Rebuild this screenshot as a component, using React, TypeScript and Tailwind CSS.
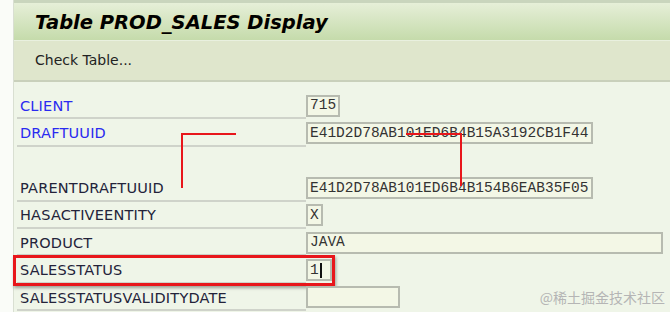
import React from 'react';

type Row = { label: string; value?: string; width: number; key?: boolean; cursor?: boolean; blank?: boolean };

const rows: Row[] = [
  { label: 'CLIENT', value: '715', width: 34, key: true },
  { label: 'DRAFTUUID', value: 'E41D2D78AB101ED6B4B15A3192CB1F44', width: 287, key: true },
  { label: '', width: 0, blank: true },
  { label: 'PARENTDRAFTUUID', value: 'E41D2D78AB101ED6B4B154B6EAB35F05', width: 287 },
  { label: 'HASACTIVEENTITY', value: 'X', width: 17 },
  { label: 'PRODUCT', value: 'JAVA', width: 357 },
  { label: 'SALESSTATUS', value: '1', width: 26, cursor: true },
  { label: 'SALESSTATUSVALIDITYDATE', value: '', width: 94 },
];

const labelFont = { fontFamily: '"DejaVu Sans", Verdana, sans-serif' };
const monoFont = { fontFamily: '"Liberation Mono", "Courier New", monospace' };

export default function App() {
  return (
    <div className="relative w-[670px] h-[312px] overflow-hidden bg-[#fafcf8] flex">
      <div className="w-[13px] shrink-0" />
      <div className="flex-1 flex flex-col border-l border-[#d9dfd2]">
        <div className="h-[3px] bg-[#c9d5bd]" />
        <div className="h-[38px] flex items-center pl-[21px] pt-[3px] bg-gradient-to-b from-[#e6efd8] to-[#c5dbab] border-b border-[#e9f0df]">
          <h1
            className="text-[19.5px] font-bold italic text-black [text-shadow:0_0_2px_#e8e6a0]"
            style={{ fontFamily: '"DejaVu Sans", Tahoma, sans-serif' }}
          >
            Table PROD_SALES Display
          </h1>
        </div>
        <div className="h-[41px] flex items-center pl-[21px] bg-[#dfe6cc] border-b-2 border-[#c9d0bb]">
          <span className="text-[14px] text-[#222]" style={labelFont}>Check Table...</span>
        </div>
        <div className="flex-1 bg-[#eff5e8] pt-[10px]">
          {rows.map((r, i) => (
            <div key={i} className="relative h-[27.4px] flex items-center">
              <div
                className={`ml-[3px] w-[289px] h-full flex items-end pl-[3px] pb-[4px] ${r.blank ? '' : 'border-b-2 border-[#cfd3ca]'}`}
              >
                <span
                  className={`text-[14.5px] leading-none tracking-[0.2px] ${r.key ? 'text-[#2a2af0]' : 'text-[#23233a]'}`}
                  style={labelFont}
                >
                  {r.label}
                </span>
              </div>
              {!r.blank && (
                <div
                  className="h-[22px] flex items-center pl-[2px] border-2 border-[#b7bbb0] bg-[#f3f7e6] text-[14.5px] text-[#333] leading-none"
                  style={{ ...monoFont, width: r.width }}
                >
                  {r.value}
                  {r.cursor && <span className="inline-block w-[2px] h-[15px] bg-[#111] ml-[1px]" />}
                </div>
              )}
              {r.cursor && (
                <div className="absolute left-[-1px] top-[-1px] w-[322px] h-[31px] border-[3px] border-[#e8161b] shadow-[1px_2px_3px_rgba(0,0,0,0.35)]" />
              )}
            </div>
          ))}
        </div>
      </div>

      {/* red annotation connectors */}
      <div className="absolute left-[181px] top-[133px] w-[55px] h-[2px] bg-[#e8161b]" />
      <div className="absolute left-[181px] top-[133px] w-[2px] h-[55px] bg-[#e8161b]" />
      <div className="absolute left-[406px] top-[133px] w-[56px] h-[2px] bg-[#e8161b]" />
      <div className="absolute left-[460px] top-[133px] w-[2px] h-[53px] bg-[#e8161b]" />

      <div
        className="absolute right-[5px] bottom-[4px] text-[14px] text-[#b5b5b5]"
        style={{ fontFamily: '"Noto Sans CJK SC", "DejaVu Sans", sans-serif' }}
      >
        @稀土掘金技术社区
      </div>
    </div>
  );
}
